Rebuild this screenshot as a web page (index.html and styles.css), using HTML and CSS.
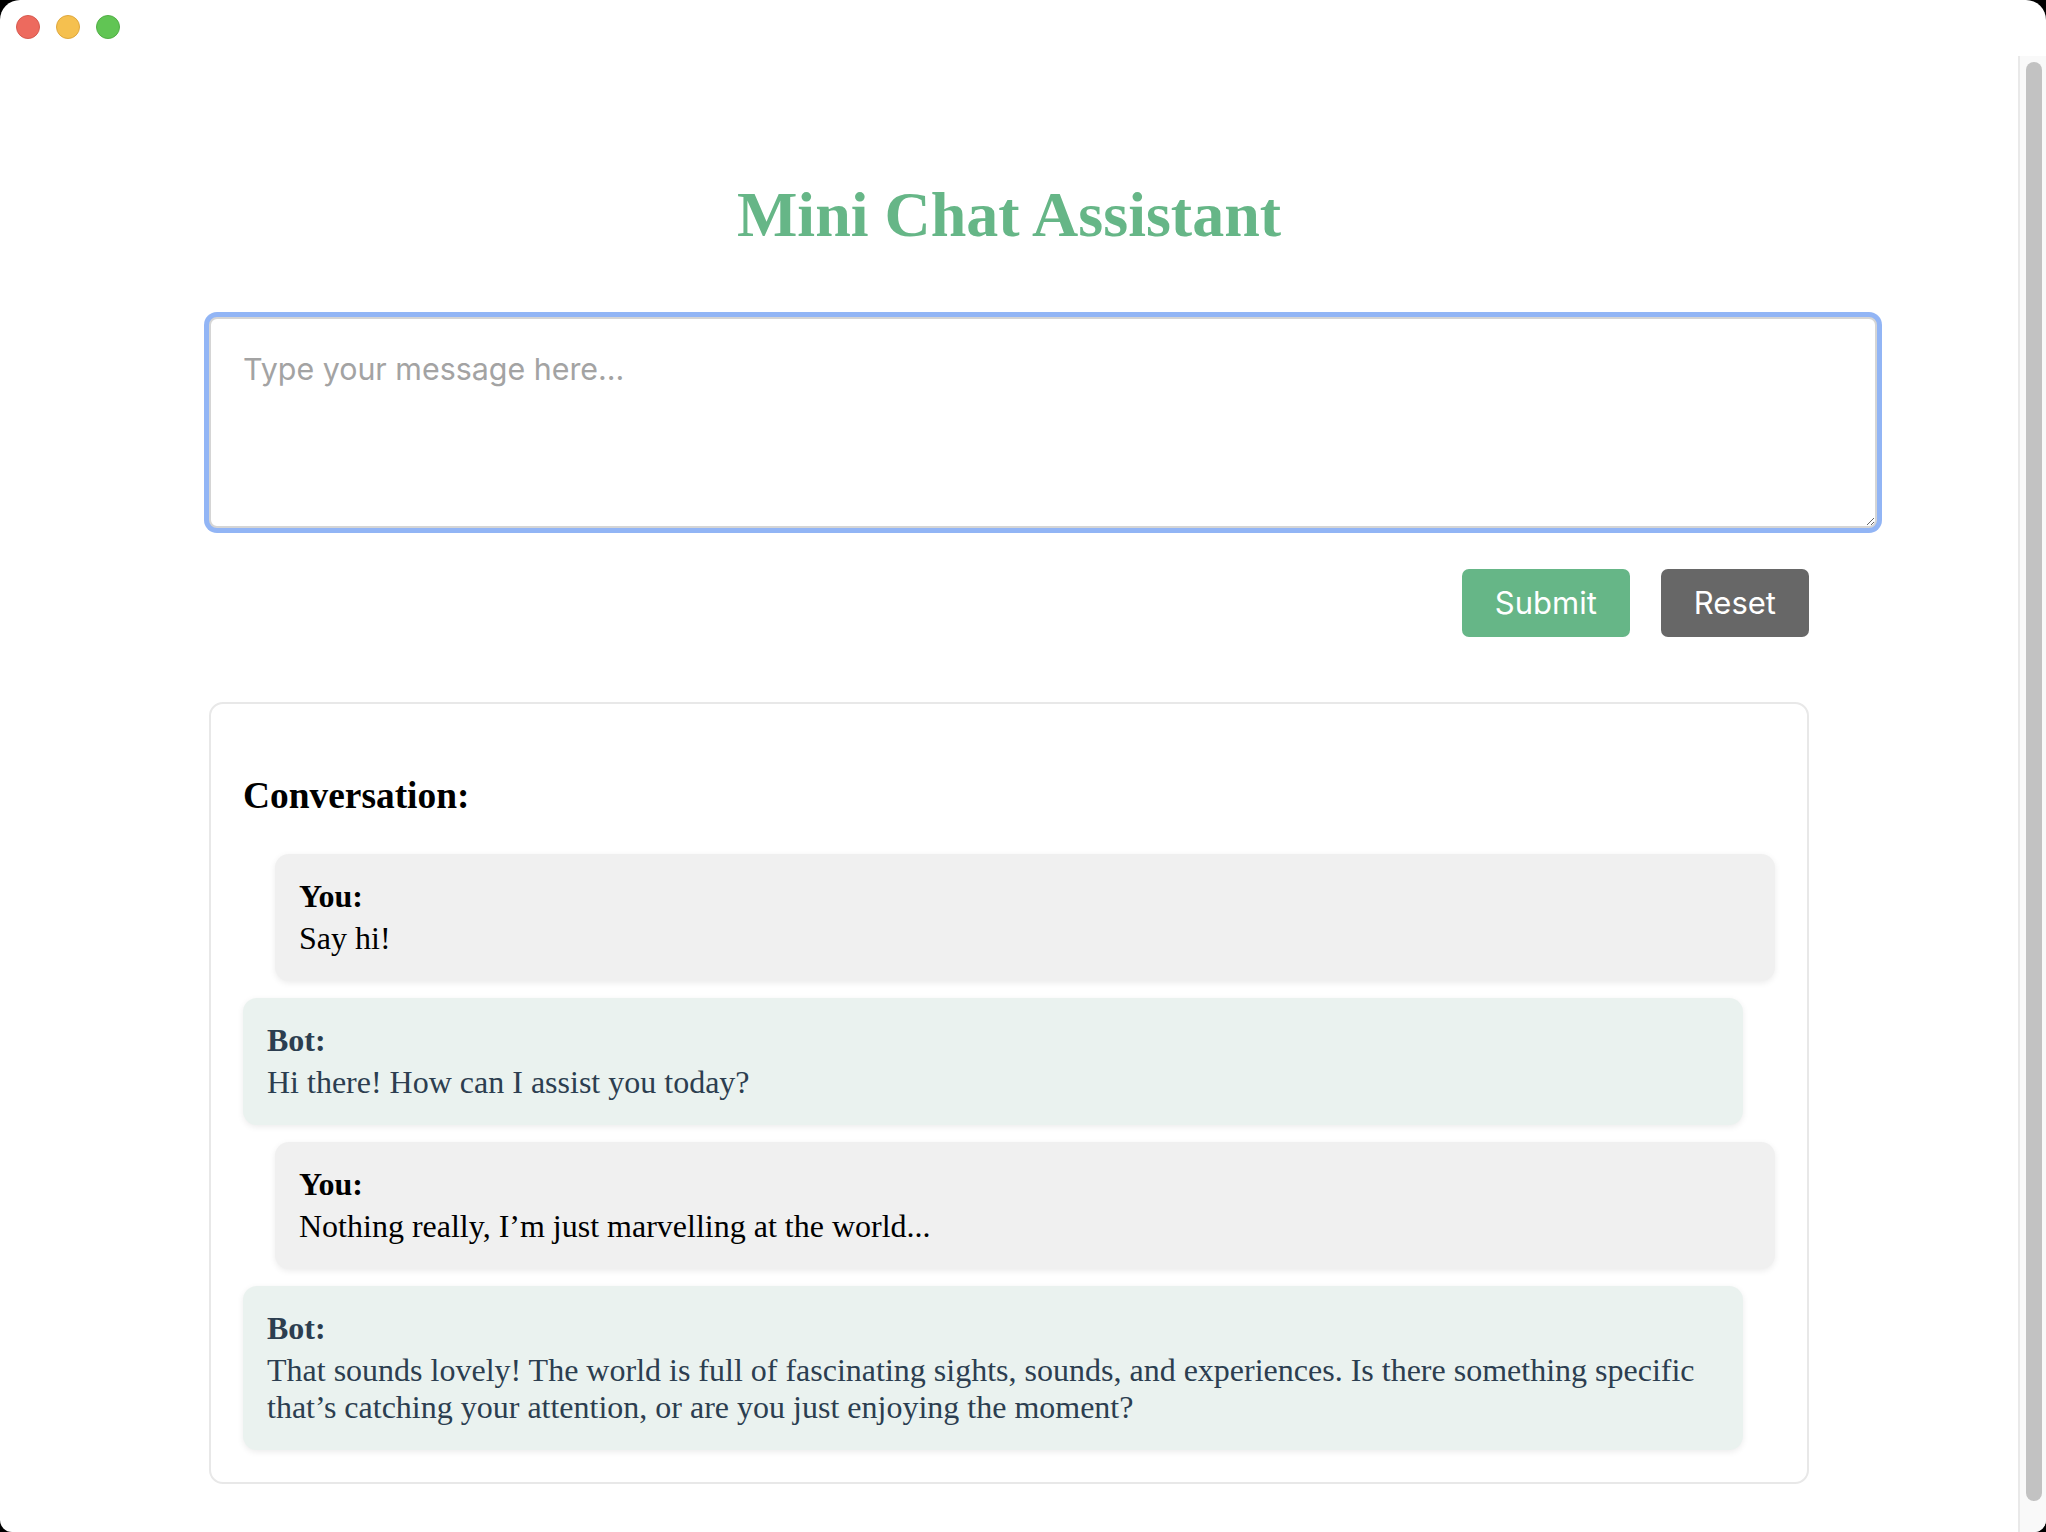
FILE: index.html
```html
<!DOCTYPE html>
<html lang="en">
<head>
<meta charset="utf-8">
<title>Mini Chat Assistant</title>
<link rel="stylesheet" href="styles.css">
</head>
<body>
<div class="window">
  <div class="titlebar">
    <span class="light red"></span>
    <span class="light yellow"></span>
    <span class="light green"></span>
  </div>
  <div class="viewport">
    <main class="page">
      <div class="container">
        <h1 class="title">Mini Chat Assistant</h1>
        <textarea class="input" placeholder="Type your message here..."></textarea>
        <div class="actions">
          <button class="btn btn-submit">Submit</button>
          <button class="btn btn-reset">Reset</button>
        </div>
        <section class="panel">
          <h3 class="panel-title">Conversation:</h3>
          <div class="msg msg-user">
            <strong class="who">You:</strong>
            <div class="text">Say hi!</div>
          </div>
          <div class="msg msg-bot">
            <strong class="who">Bot:</strong>
            <div class="text">Hi there! How can I assist you today?</div>
          </div>
          <div class="msg msg-user">
            <strong class="who">You:</strong>
            <div class="text">Nothing really, I’m just marvelling at the world...</div>
          </div>
          <div class="msg msg-bot">
            <strong class="who">Bot:</strong>
            <div class="text">That sounds lovely! The world is full of fascinating sights, sounds, and experiences. Is there something specific that’s catching your attention, or are you just enjoying the moment?</div>
          </div>
        </section>
      </div>
    </main>
    <div class="scrollbar"><div class="thumb"></div></div>
  </div>
</div>
</body>
</html>
```

FILE: styles.css
```css
html, body {
  margin: 0;
  padding: 0;
  background: #000;
}

.window {
  width: 2046px;
  height: 1532px;
  background: #fff;
  border-radius: 20px 20px 12px 12px;
  overflow: hidden;
  display: flex;
  flex-direction: column;
}

.titlebar {
  height: 56px;
  flex: none;
  display: flex;
  align-items: center;
  gap: 16px;
  padding-left: 16px;
  padding-bottom: 2px;
  box-sizing: border-box;
}

.light {
  width: 24px;
  height: 24px;
  border-radius: 50%;
  box-sizing: border-box;
}
.red { background: #ed6a5e; border: 1px solid #d65a4f; }
.yellow { background: #f5c04f; border: 1px solid #dea73d; }
.green { background: #61c554; border: 1px solid #52ae46; }

.viewport {
  flex: 1;
  display: flex;
  min-height: 0;
}

.page {
  flex: 1;
  min-width: 0;
  padding-top: 80px;
  font-family: "Liberation Serif", "Times New Roman", serif;
  font-size: 32px;
}

.container {
  width: 1600px;
  margin: 0 auto;
}

.title {
  margin: 42px 0 65px;
  font-size: 64px;
  font-weight: bold;
  text-align: center;
  color: #66b687;
  line-height: normal;
}

.input {
  display: block;
  box-sizing: content-box;
  width: 100%;
  height: 143px;
  margin: 0 0 41px;
  padding: 32px;
  border: 2px solid #d5d5d5;
  border-radius: 8px;
  box-shadow: 0 0 0 5px #92b5f5;
  outline: none;
  font-family: Inter, "Liberation Sans", sans-serif;
  font-size: 30.4px;
  color: #222;
  background: #fff;
  resize: both;
}

.input::placeholder {
  color: #a3a3a3;
}

.actions {
  display: flex;
  justify-content: flex-end;
  gap: 31px;
  margin-bottom: 65px;
}

.btn {
  border: none;
  border-radius: 7px;
  padding: 16px 33px;
  font-family: Inter, "Liberation Sans", sans-serif;
  font-size: 31px;
  line-height: 36px;
  color: #fff;
  cursor: pointer;
}

.btn-submit { background: #66b687; }
.btn-reset { background: #676767; }

.panel {
  border: 2px solid #e8e8e8;
  border-radius: 14px;
  padding: 33px 32px 32px;
}

.panel-title {
  margin: 37px 0;
  font-size: 37.4px;
  font-weight: bold;
  color: #000;
}

.msg {
  width: 1500px;
  box-sizing: border-box;
  padding: 24px;
  border-radius: 14px;
  box-shadow: 0 2px 6px rgba(0, 0, 0, 0.08);
  margin-bottom: 17px;
}

.msg:last-child {
  margin-bottom: 0;
}

.msg-user {
  margin-left: auto;
  background: #f0f0f0;
  color: #000;
}

.msg-bot {
  background: #eaf2ef;
  color: #2c3e50;
}

.who {
  display: block;
  margin-bottom: 5px;
  font-weight: bold;
}

.scrollbar {
  width: 28px;
  flex: none;
  box-sizing: border-box;
  background: #f9f9f9;
  border-left: 2px solid #e9e9e9;
  padding: 6px 4px 31px 6px;
  display: flex;
}

.thumb {
  flex: 1;
  background: #c2c2c2;
  border-radius: 8px;
}
```
